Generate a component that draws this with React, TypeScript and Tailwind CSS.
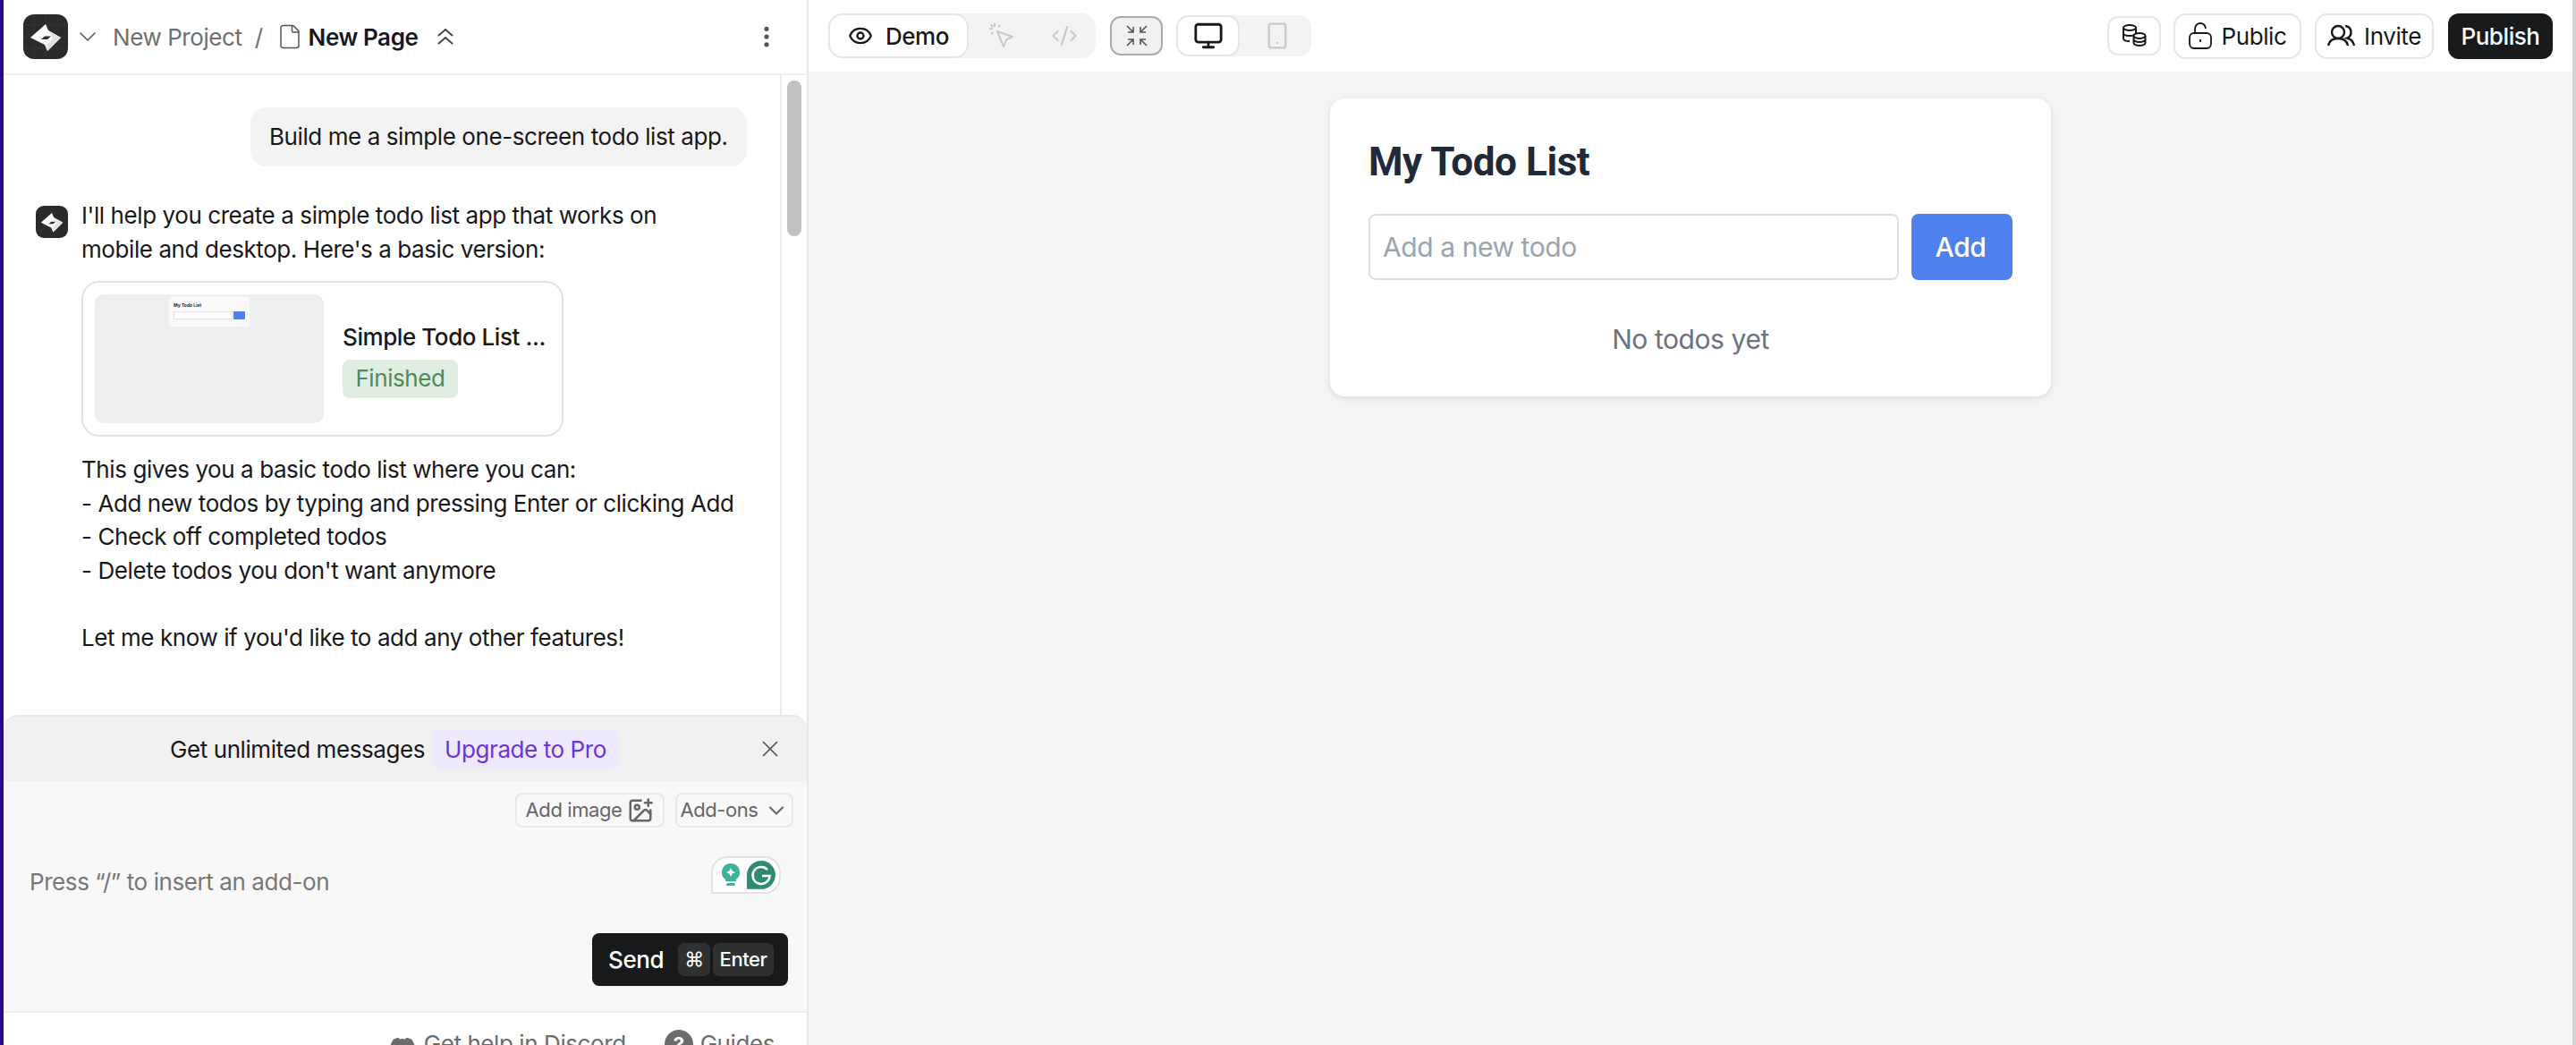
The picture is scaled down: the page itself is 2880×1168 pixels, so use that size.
import {
  ChevronDown,
  CodeXml,
  EllipsisVertical,
  Eye,
  File,
  ImagePlus,
  Monitor,
  Smartphone,
  X,
} from "lucide-react"
import { FaDiscord } from "react-icons/fa"

function Logo({ size, box }: { size: number; box: string }) {
  return (
    <div className={`shrink-0 overflow-hidden bg-[#2b2b2d] ${box}`}>
      <svg width={size} height={size} viewBox="0 0 50 50">
        <path d="M0 12H50M0 25H50M0 38H50M12 0V50M25 0V50M38 0V50" stroke="#ffffff" strokeOpacity="0.07" strokeWidth="0.6" />
        <path d="M8 26 L25 11 L28 18 L42 26 L27 41 L24 34 Z" fill="#ffffff" />
        <path d="M28 18 L42 26 L27 41 L26 34 L33 27 Z" fill="#e2e2e2" />
        <path d="M20 28 L24 24.500 L31 24.500 L27 28 Z" fill="#2b2b2d" />
      </svg>
    </div>
  )
}

function Header() {
  return (
    <div className="flex h-[84px] shrink-0 items-center border-b-2 border-[#f2f2f2] pl-[22px] pr-[30px] text-[26px]">
      <Logo size={50} box="h-[50px] w-[50px] rounded-[12px]" />
      <ChevronDown size={32} strokeWidth={1.2} className="ml-[6px] text-[#555]" />
      <span className="ml-[12px] text-[#6f6f6f]">New Project</span>
      <span className="ml-[14px] text-[#6f6f6f]">/</span>
      <File size={30} strokeWidth={1.2} className="ml-[15px] text-[#555]" />
      <span className="ml-[6px] font-semibold text-[#18181b]">New Page</span>
      <svg width="20" height="20" viewBox="0 0 20 20" fill="none" stroke="#444" strokeWidth="2" className="ml-[21px]">
        <path d="M2 9 L10 2 L18 9" />
        <path d="M2 18 L10 11 L18 18" />
      </svg>
      <EllipsisVertical size={30} strokeWidth={2.2} className="ml-auto text-[#555]" />
    </div>
  )
}

function ResultCard() {
  return (
    <div className="mb-[18px] mt-[17px] flex h-[174px] w-[539px] items-center rounded-[20px] border-2 border-[#e3e3e3] pl-[13px]">
      <div className="flex h-[144px] w-[256px] shrink-0 justify-center rounded-[10px] bg-[#eeeff0]">
        <div className="mt-[3px] h-[33px] w-[90px] rounded-[3px] bg-[#f9f9fa] px-[5px] pt-[5px]">
          <div className="text-[5px] font-bold leading-[8px] tracking-normal text-[#1f2937]">My Todo List</div>
          <div className="mt-[3px] flex gap-[1px]">
            <div className="h-[9px] flex-1 border border-[#e5e5e5] bg-white" />
            <div className="h-[9px] w-[13px] rounded-[1px] bg-[#4f80ee]" />
          </div>
        </div>
      </div>
      <div className="ml-[21px] min-w-0 flex-1">
        <div className="mt-[1px] whitespace-nowrap text-[26px] font-medium leading-[36px] text-[#18181b]">Simple Todo List ...</div>
        <div className="mt-[7px] flex h-[43px] w-[129px] items-center justify-center rounded-[8px] bg-[#dfeee0] text-[26px] text-[#4f8a58]">
          Finished
        </div>
      </div>
    </div>
  )
}

function Chat() {
  return (
    <div className="flex min-h-0 flex-1">
      <div className="min-w-0 flex-1 border-r-2 border-[#ececec] pt-[36px] text-[26px] text-[#18181b]">
        <div className="flex justify-end pr-[37px]">
          <div className="flex h-[66px] w-[555px] items-center rounded-[18px] bg-[#f3f3f3] pb-[1px] pl-[21px]">
            Build me a simple one-screen todo list app.
          </div>
        </div>
        <div className="mt-[25px] flex pl-[36px] leading-[37.5px]">
          <Logo size={36} box="mt-[19px] h-[36px] w-[36px] rounded-[9px]" />
          <div className="ml-[15px] mt-[11px] w-[760px]">
            <p className="w-[720px]">I'll help you create a simple todo list app that works on mobile and desktop. Here's a basic version:</p>
            <ResultCard />
            <p>This gives you a basic todo list where you can:</p>
            <p>- Add new todos by typing and pressing Enter or clicking Add</p>
            <p>- Check off completed todos</p>
            <p>- Delete todos you don't want anymore</p>
            <p className="mt-[37.5px]">Let me know if you'd like to add any other features!</p>
          </div>
        </div>
      </div>
      <div className="w-[28px] shrink-0 pl-[6px] pt-[6px]">
        <div className="h-[174px] w-[16px] rounded-full bg-[#c1c1c1]" />
      </div>
    </div>
  )
}

function Composer() {
  return (
    <div className="flex h-[331px] shrink-0 flex-col overflow-hidden rounded-t-[16px] border-t-2 border-[#e8e8e8] bg-[#f8f8f8]">
      <div className="relative flex h-[72px] shrink-0 items-center bg-[#f1f1f1] pl-[186px] text-[26px]">
        <span className="text-[#18181b]">Get unlimited messages</span>
        <span className="ml-[8px] flex h-[43px] w-[209px] items-center justify-center rounded-[8px] bg-[#efe9fd] text-[#6a35d9]">Upgrade to Pro</span>
        <X size={30} strokeWidth={1.4} className="absolute right-[26px] text-[#555]" />
      </div>
      <div className="mt-[13px] flex justify-end gap-[12px] pr-[15px] text-[22px] text-[#666]">
        <div className="flex h-[39px] w-[167px] items-center justify-center gap-[6px] whitespace-nowrap rounded-[8px] border-2 border-[#e8e8e8]">
          Add image
          <ImagePlus size={30} strokeWidth={2} />
        </div>
        <div className="flex h-[39px] w-[132px] items-center justify-center gap-[6px] whitespace-nowrap rounded-[8px] border-2 border-[#e8e8e8]">
          Add-ons
          <ChevronDown size={28} strokeWidth={1.8} />
        </div>
      </div>
      <div className="relative mt-[32px] flex h-[42px] items-center pl-[29px] pt-[14px] text-[26px] text-[#777]">
        Press “/” to insert an add-on
        <div className="absolute right-[29px] top-0 flex h-[42px] w-[78px] items-center gap-[7px] rounded-[18px] rounded-bl-none border-2 border-[#e0e3e3] bg-white pl-[9px]">
          <svg width="22" height="28" viewBox="0 0 22 28">
            <path d="M11 1a10 10 0 0 1 6 18v2H5v-2a10 10 0 0 1 6-18z" fill="#3fb39a" />
            <path d="M11 6l1.6 3.4L16 11l-3.4 1.6L11 16l-1.6-3.4L6 11l3.4-1.6z" fill="#fff" />
            <rect x="6" y="23" width="10" height="3" rx="1.5" fill="#3fb39a" />
          </svg>
          <svg width="32" height="32" viewBox="0 0 32 32">
            <path d="M16 0a16 16 0 0 1 3 31.700H0V16A16 16 0 0 1 16 0z" fill="#2f8a74" />
            <path d="M23 10a9.500 9.500 0 1 0 2.500 7H17" fill="none" stroke="#fff" strokeWidth="2.600" />
          </svg>
        </div>
      </div>
      <div className="mt-[44px] flex justify-end pr-[21px]">
        <div className="flex h-[59px] w-[219px] items-center rounded-[8px] bg-[#18191b] pl-[18px] text-white">
          <span className="text-[26px] font-medium">Send</span>
          <span className="ml-[16px] flex h-[37px] w-[36px] items-center justify-center rounded-[7px] bg-[#303031] text-[22px]">⌘</span>
          <span className="ml-[3px] flex h-[37px] w-[68px] items-center justify-center rounded-[7px] bg-[#303031] text-[22px] font-medium">Enter</span>
        </div>
      </div>
    </div>
  )
}

function Footer() {
  return (
    <div className="flex h-[38px] shrink-0 justify-end gap-[43px] overflow-hidden border-t-2 border-[#efefef] bg-white pr-[36px] pt-[17px] text-[26px] leading-[36px] text-[#6b6b6b]">
      <div className="flex h-[36px] items-center gap-[8px] whitespace-nowrap">
        <FaDiscord size={32} className="mt-[8px]" />
        Get help in Discord
      </div>
      <div className="flex h-[36px] items-center gap-[8px] whitespace-nowrap">
        <div className="flex h-[32px] w-[32px] items-center justify-center rounded-full bg-[#6b6b6b] text-[22px] font-bold text-white">?</div>
        Guides
      </div>
    </div>
  )
}

function LeftPanel() {
  return (
    <div className="flex h-full w-[900px] shrink-0 flex-col border-r-2 border-[#e8e8e8] bg-white">
      <Header />
      <Chat />
      <Composer />
      <Footer />
    </div>
  )
}

function Toolbar() {
  return (
    <div className="flex h-[80px] shrink-0 items-center bg-white pl-[22px] pr-[22px] text-[26px] text-[#18181b]">
      <div className="flex h-[50px] w-[299px] items-center rounded-[16px] bg-[#f3f3f3]">
        <div className="flex h-full w-[157px] items-center justify-center gap-[14px] rounded-[16px] border-2 border-[#e6e6e6] bg-white font-medium">
          <Eye size={28} strokeWidth={2} />
          Demo
        </div>
        <svg width="30" height="30" viewBox="0 0 30 30" fill="none" stroke="#c9c9c9" strokeWidth="2" className="ml-[22px]">
          <path d="M10 10 L27 16 L20 19.500 L17 27 Z" strokeLinejoin="round" />
          <path d="M7 1v4M1 7h4M2.500 2.500l2.500 2.500M13 3l-2 2.500M3 13l2.500-2" />
        </svg>
        <CodeXml size={30} strokeWidth={1.8} className="ml-[40px] text-[#c9c9c9]" />
      </div>
      <div className="ml-[16px] flex h-[44px] w-[59px] items-center justify-center rounded-[12px] border-2 border-[#a9a9a9] bg-[#f0f0f0]">
        <svg width="28" height="28" viewBox="0 0 28 28" fill="none" stroke="#555" strokeWidth="1.600">
          <path d="M3 3 L10 10 M4 10 H10 V4" />
          <path d="M25 3 L18 10 M24 10 H18 V4" />
          <path d="M3 25 L10 18 M4 18 H10 V24" />
          <path d="M25 25 L18 18 M24 18 H18 V24" />
        </svg>
      </div>
      <div className="ml-[15px] flex h-[46px] w-[151px] items-center rounded-[14px] bg-[#f3f3f3]">
        <div className="flex h-full w-[71px] items-center justify-center rounded-[14px] border-2 border-[#e6e6e6] bg-white">
          <Monitor size={34} strokeWidth={2} />
        </div>
        <Smartphone size={32} strokeWidth={1.8} className="ml-[26px] text-[#c9c9c9]" />
      </div>
      <div className="ml-auto flex h-[44px] w-[60px] items-center justify-center rounded-[12px] border-2 border-[#e6e6e6]">
        <svg width="28" height="26" viewBox="0 0 28 26" fill="none" stroke="currentColor" strokeWidth="2">
          <ellipse cx="9" cy="4" rx="7" ry="3" />
          <path d="M2 4v12c0 1.700 3 3 7 3M2 10c0 1.700 3 3 7 3s7-1.300 7-3M2 16" />
          <path d="M16 4v6" />
          <ellipse cx="20" cy="13" rx="6.500" ry="3" fill="#fff" />
          <path d="M13.500 13v8c0 1.700 3 3 6.500 3s6.500-1.300 6.500-3v-8M13.500 17c0 1.700 3 3 6.500 3s6.500-1.300 6.500-3" />
        </svg>
      </div>
      <div className="ml-[14px] flex h-[51px] w-[143px] items-center justify-center gap-[11px] rounded-[14px] border-2 border-[#e6e6e6]">
        <svg width="26" height="30" viewBox="0 0 26 30" fill="none" stroke="currentColor" strokeWidth="1.800">
          <rect x="1" y="12" width="24" height="17" rx="5" />
          <path d="M7 12V7a6 6 0 0 1 12 0" />
          <path d="M13 19v3" />
        </svg>
        Public
      </div>
      <div className="ml-[15px] flex h-[51px] w-[133px] items-center justify-center gap-[9px] rounded-[14px] border-2 border-[#e6e6e6]">
        <svg width="32" height="26" viewBox="0 0 32 26" fill="none" stroke="currentColor" strokeWidth="2.400">
          <circle cx="12" cy="9" r="7" />
          <path d="M1 24c1-5 5-8 11-8s10 3 11 8" />
          <path d="M20 2a7 7 0 0 1 2 13.500c4 1 7 4 8 8.500" />
        </svg>
        Invite
      </div>
      <div className="ml-[16px] flex h-[51px] w-[117px] items-center justify-center rounded-[12px] bg-[#18191b] font-medium text-white">
        Publish
      </div>
    </div>
  )
}

function TodoCard() {
  return (
    <div className="mx-auto mt-[30px] h-[333px] w-[806px] rounded-[16px] bg-white px-[43px] pt-[43px] shadow-[0_2px_6px_rgba(0,0,0,0.1)]">
      <h1 className="text-[44px] font-bold leading-[56px] text-[#1f2937] [font-family:Roboto,sans-serif]">My Todo List</h1>
      <div className="mt-[30px] flex gap-[14px]">
        <div className="flex h-[74px] flex-1 items-center rounded-[8px] border-2 border-[#dcdee2] pl-[14px] pt-[1px] text-[30px] text-[#9ca3af]">
          Add a new todo
        </div>
        <div className="flex h-[74px] w-[113px] items-center justify-center rounded-[8px] bg-[#4f80ee] pr-[3px] text-[30px] font-medium text-white">
          Add
        </div>
      </div>
      <p className="mt-[46px] text-center text-[30px] leading-[40px] text-[#6b7280]">No todos yet</p>
    </div>
  )
}

export default function App() {
  return (
    <div className="flex h-[1168px] w-[2880px] overflow-hidden bg-white tracking-[-0.42px] [font-family:Inter,sans-serif]">
      <div className="w-[4px] shrink-0 bg-[#2a0a8c]" />
      <LeftPanel />
      <div className="flex h-full min-w-0 flex-1 flex-col border-r-4 border-[#d2d2d2] bg-[#f3f4f6]">
        <Toolbar />
        <TodoCard />
      </div>
    </div>
  )
}
